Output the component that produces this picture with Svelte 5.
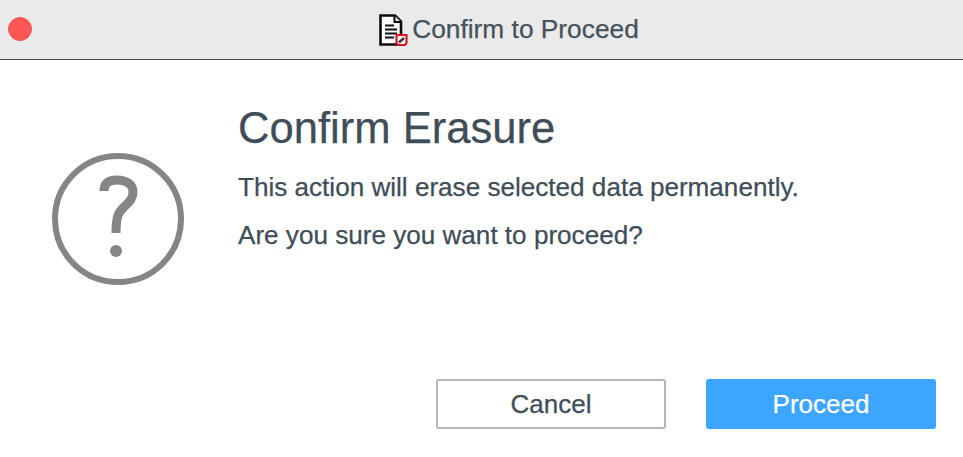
<script>
	let title = "Confirm to Proceed"
</script>

<div class="dialog">
	<header class="titlebar">
		<span class="close"></span>
		<div class="title">
			<svg class="doc" width="30" height="34" viewBox="0 0 30 34">
				<path d="M1.500 2.500H16L22 8.500V31.500H1.500Z" fill="#fff" stroke="#0c0c0c" stroke-width="2.600"/>
				<path d="M15.500 2.500V9H22" fill="#e8e8e8" stroke="#0c0c0c" stroke-width="2"/>
				<path d="M6 12.500H15M6 16.500H18M6 20.500H18M6 24.500H15" stroke="#111" stroke-width="1.800"/>
				<path d="M17.500 22H27.500V30L26 32H19L17.500 30Z" fill="#fff" stroke="#e0121f" stroke-width="2.200"/>
				<path d="M20 29.500L25 25" stroke="#333" stroke-width="2.400"/>
			</svg>
			<span>{title}</span>
		</div>
	</header>
	<main class="body">
		<div class="icon">
			<svg width="134" height="134" viewBox="0 0 134 134">
				<circle cx="66" cy="66" r="63" fill="none" stroke="#858585" stroke-width="6"/>
				<path d="M52 38C52 30 57 27 65 27C74 27 81 31 81 39C81 46 77 49 72 54C67 59 64 62 64 80" fill="none" stroke="#858585" stroke-width="9"/>
				<circle cx="64" cy="98" r="6" fill="#858585"/>
			</svg>
		</div>
		<div class="message">
			<h1>Confirm Erasure</h1>
			<p>This action will erase selected data permanently.</p>
			<p>Are you sure you want to proceed?</p>
		</div>
	</main>
	<footer class="actions">
		<button class="cancel">Cancel</button>
		<button class="proceed">Proceed</button>
	</footer>
</div>

<style>
	:global(body) {
		margin: 0;
		background: #fff;
		font-family: "Liberation Sans", Arial, sans-serif;
		-webkit-text-stroke: 0.25px currentColor;
	}
	.dialog {
		width: 963px;
		height: 457px;
		display: flex;
		flex-direction: column;
		overflow: hidden;
	}
	.titlebar {
		height: 60px;
		box-sizing: border-box;
		flex: none;
		display: flex;
		align-items: center;
		justify-content: center;
		padding-left: 55px;
		position: relative;
		background: #eaeaea;
		border-bottom: 1px solid #4a4a4a;
	}
	.close {
		position: absolute;
		left: 8px;
		top: 17px;
		width: 24px;
		height: 24px;
		border-radius: 50%;
		background: #fe5655;
		border: 1px solid #ec5a5a;
		box-sizing: border-box;
	}
	.title {
		display: flex;
		align-items: center;
		gap: 3px;
		font-size: 26.300px;
		color: #46525c;
	}
	.doc {
		display: block;
	}
	.body {
		flex: 1;
		display: flex;
	}
	.icon {
		width: 238px;
		flex: none;
		padding: 93px 0 0 52px;
		box-sizing: border-box;
	}
	.icon svg {
		display: block;
	}
	.message {
		padding-top: 41px;
		color: #3f4d59;
	}
	h1 {
		margin: 0 0 15px;
		font-size: 43.600px;
		font-weight: 400;
		line-height: 54px;
	}
	p {
		margin: 0 0 14px;
		font-size: 26.100px;
		line-height: 34px;
	}
	.actions {
		flex: none;
		display: flex;
		justify-content: flex-end;
		gap: 40px;
		padding: 0 27px 28px 0;
	}
	button {
		width: 230px;
		height: 50px;
		box-sizing: border-box;
		font-family: inherit;
		font-size: 26px;
		border-radius: 3px;
		padding-bottom: 0;
	}
	.cancel {
		background: #fff;
		border: 2px solid #b5b5b5;
		color: #3f4d59;
	}
	.proceed {
		background: #3ba5ff;
		border: none;
		color: #fff;
	}
</style>
